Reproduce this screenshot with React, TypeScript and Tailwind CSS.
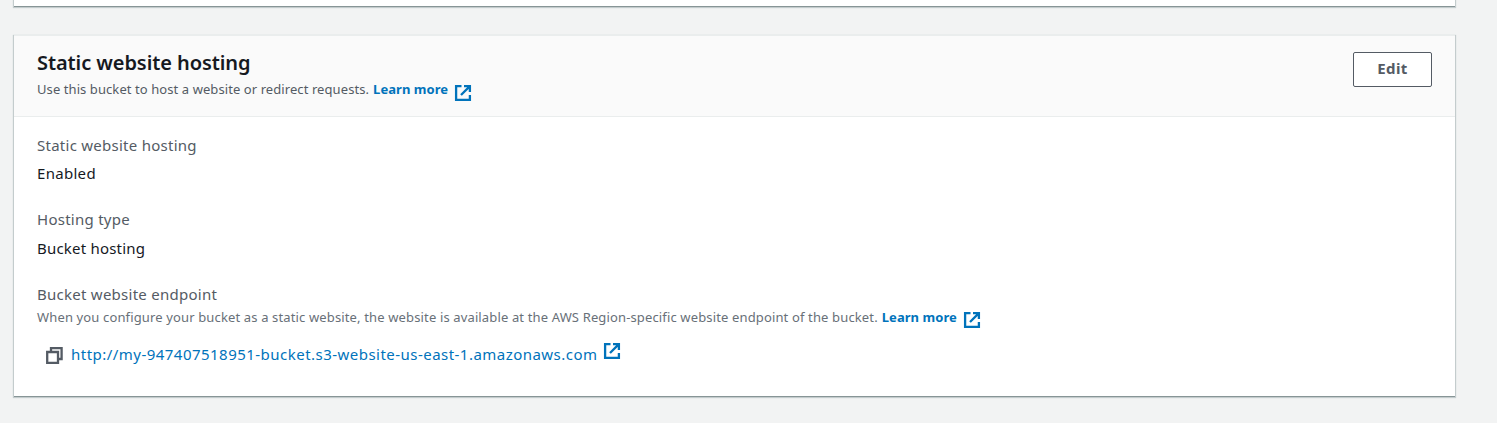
import type { ReactNode } from "react";

function ExternalIcon({ className = "" }: { className?: string }) {
  return (
    <svg className={`size-[18px] shrink-0 ${className}`} viewBox="0 0 18 18" fill="none" stroke="#0073bb" strokeWidth="2.3">
      <path d="M7.5 2.1H2.1v13.8h13.8v-5" />
      <path d="M10 2.1h5.9V8M15.9 2.1L7 11" />
    </svg>
  );
}

function CopyIcon() {
  return (
    <svg className="mt-[18px] ml-[9px] size-[17px] shrink-0" viewBox="0 0 17 17" fill="none" stroke="#545b64" strokeWidth="2.3">
      <path d="M5 5V1.2h10.6V12H12" />
      <path d="M1.2 5h10.8v10.8H1.2z" />
    </svg>
  );
}

function LearnMore({ iconClass }: { iconClass: string }) {
  return (
    <a className="ml-1 flex text-[#0073bb]">
      <span className="text-[13px] font-bold tracking-[0.05px]">Learn more</span>
      <ExternalIcon className={iconClass} />
    </a>
  );
}

function Label({ children }: { children: ReactNode }) {
  return <div className="h-[22px] text-[15px] leading-[22px] tracking-[0.26px] text-[#545b64]">{children}</div>;
}

export default function App() {
  return (
    <div className="h-[423px] overflow-hidden bg-[#f2f3f3] pr-[42px] pl-[14px] font-['Noto_Sans',sans-serif] text-[#16191f]">
      <div className="h-[6px] bg-white shadow-[0_1px_0_0_#879596,0_1px_1px_1px_#c4cccd]" />
      <section className="mt-[29px] h-[361px] border-t border-[#eaeded] bg-white shadow-[0_1px_0_0_#879596,0_1px_1px_1px_#c4cccd]">
        <header className="flex h-[81px] justify-between border-b border-[#eaeded] bg-[#fafafa] pr-[23px] pl-[23px]">
          <div className="pt-[13px]">
            <h2 className="h-[28px] text-[20px] leading-[28px] font-semibold tracking-[-0.08px] whitespace-nowrap">Static website hosting</h2>
            <div className="flex h-[23px] text-[13px] leading-[24px] whitespace-nowrap text-[#545b64]">
              <span className="tracking-[0.08px]">Use this bucket to host a website or redirect requests.</span>
              <LearnMore iconClass="mt-[7px] ml-[5.5px]" />
            </div>
          </div>
          <button className="mt-[16px] h-[35px] w-[79px] rounded-[2px] border border-[#545b64] bg-white pb-[3px] text-[15px] leading-[22px] font-bold tracking-[0.4px] text-[#545b64]">
            Edit
          </button>
        </header>
        <div className="px-[23px] pt-[17px] whitespace-nowrap">
          <Label>Static website hosting</Label>
          <div className="mt-[6px] h-[22px] text-[15px] leading-[22px] tracking-[0.3px]">Enabled</div>
          <div className="mt-[24px]">
            <Label>Hosting type</Label>
            <div className="mt-[7px] h-[22px] text-[15px] leading-[22px] tracking-[0.2px]">Bucket hosting</div>
          </div>
          <div className="mt-[24px]">
            <Label>Bucket website endpoint</Label>
            <div className="flex h-[24px] text-[13px] leading-[24px] text-[#687078]">
              <span className="tracking-[0.14px]">When you configure your bucket as a static website, the website is available at the AWS Region-specific website endpoint of the bucket.</span>
              <LearnMore iconClass="mt-[6px] ml-[6px]" />
            </div>
            <div className="flex h-[30px]">
              <CopyIcon />
              <a className="mt-[14px] ml-[8px] text-[15px] leading-[22px] tracking-[0.47px] text-[#0073bb]">http://my-947407518951-bucket.s3-website-us-east-1.amazonaws.com</a>
              <ExternalIcon className="mt-[13px] ml-[6px]" />
            </div>
          </div>
        </div>
      </section>
    </div>
  );
}
